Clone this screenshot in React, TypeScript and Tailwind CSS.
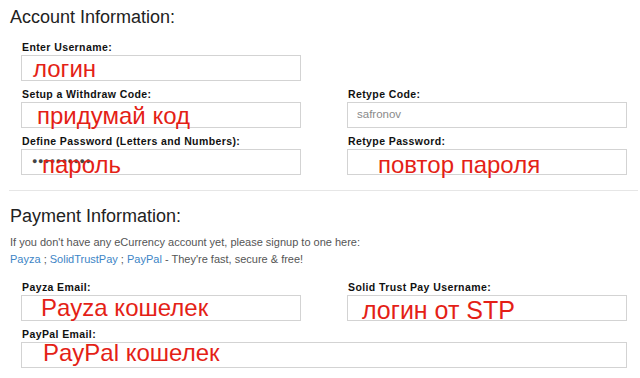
import React from "react";

type FieldProps = {
  label: string;
  note?: string;
  noteClass?: string;
  children?: React.ReactNode;
  wide?: boolean;
};

// one labelled input box; the red note is a hand-written overlay on top
function Field({ label, note, noteClass, children, wide }: FieldProps) {
  return (
    <div className={wide ? "col-span-2" : ""}>
      <div className="pl-[1px] mb-[1px] text-[10.5px] leading-[14px] font-bold text-[#111] tracking-[0.4px]">
        {label}
      </div>
      <div className="relative h-[26px] border border-[#d3d3d3] bg-white flex items-center">
        {children}
        {note && (
          <span
            className={
              "absolute text-[24px] leading-[24px] text-[#e41f17] whitespace-nowrap " +
              (noteClass ?? "")
            }
          >
            {note}
          </span>
        )}
      </div>
    </div>
  );
}

export default function App() {
  return (
    <div className="w-[640px] h-[378px] overflow-hidden bg-white font-['Liberation_Sans',Arial,sans-serif]">
      {/* Account */}
      <div className="px-[10px] pt-[6px]">
        <h2 className="text-[18px] leading-[22px] text-[#222]">Account Information:</h2>

        <div className="mt-[12px] pl-[11px] grid grid-cols-[280px_280px] gap-x-[46px] gap-y-[6px]">
          <Field label="Enter Username:" note="логин" noteClass="left-[11px] top-[1px]" />
          <div />
          <Field label="Setup a Withdraw Code:" note="придумай код" noteClass="left-[15px] top-[1px]" />
          <Field label="Retype Code:">
            <span className="pl-[9px] text-[11.5px] text-[#8a8a8a]">safronov</span>
          </Field>
          <Field label="Define Password (Letters and Numbers):" note="пароль" noteClass="left-[20px] top-[3px]">
            <span className="pl-[10px] text-[9px] tracking-[0.5px] text-[#444]">●●●●●●●●●●</span>
          </Field>
          <Field label="Retype Password:" note="повтор пароля" noteClass="left-[30px] top-[3px]" />
        </div>
      </div>

      <div className="mt-[15px] ml-[9px] w-[629px] border-t border-[#e6e6e6]" />

      {/* Payment */}
      <div className="px-[10px] pt-[14px]">
        <h2 className="text-[18px] leading-[22px] text-[#222]">Payment Information:</h2>
        <div className="mt-[7px] text-[11px] leading-[17px] text-[#555]">
          <p>If you don't have any eCurrency account yet, please signup to one here:</p>
          <p>
            <a className="text-[#3d85c6]">Payza</a> ; <a className="text-[#3d85c6]">SolidTrustPay</a> ;{" "}
            <a className="text-[#3d85c6]">PayPal</a> - They're fast, secure &amp; free!
          </p>
        </div>

        <div className="mt-[12px] pl-[11px] grid grid-cols-[280px_280px] gap-x-[46px] gap-y-[6px]">
          <Field label="Payza Email:" note="Payza кошелек" noteClass="left-[19px] top-[0px]" />
          <Field label="Solid Trust Pay Username:" note="логин от STP" noteClass="left-[14px] top-[2px] text-[25px]" />
          <Field label="PayPal Email:" wide note="PayPal кошелек" noteClass="left-[21px] top-[-2px]" />
        </div>
      </div>
    </div>
  );
}
